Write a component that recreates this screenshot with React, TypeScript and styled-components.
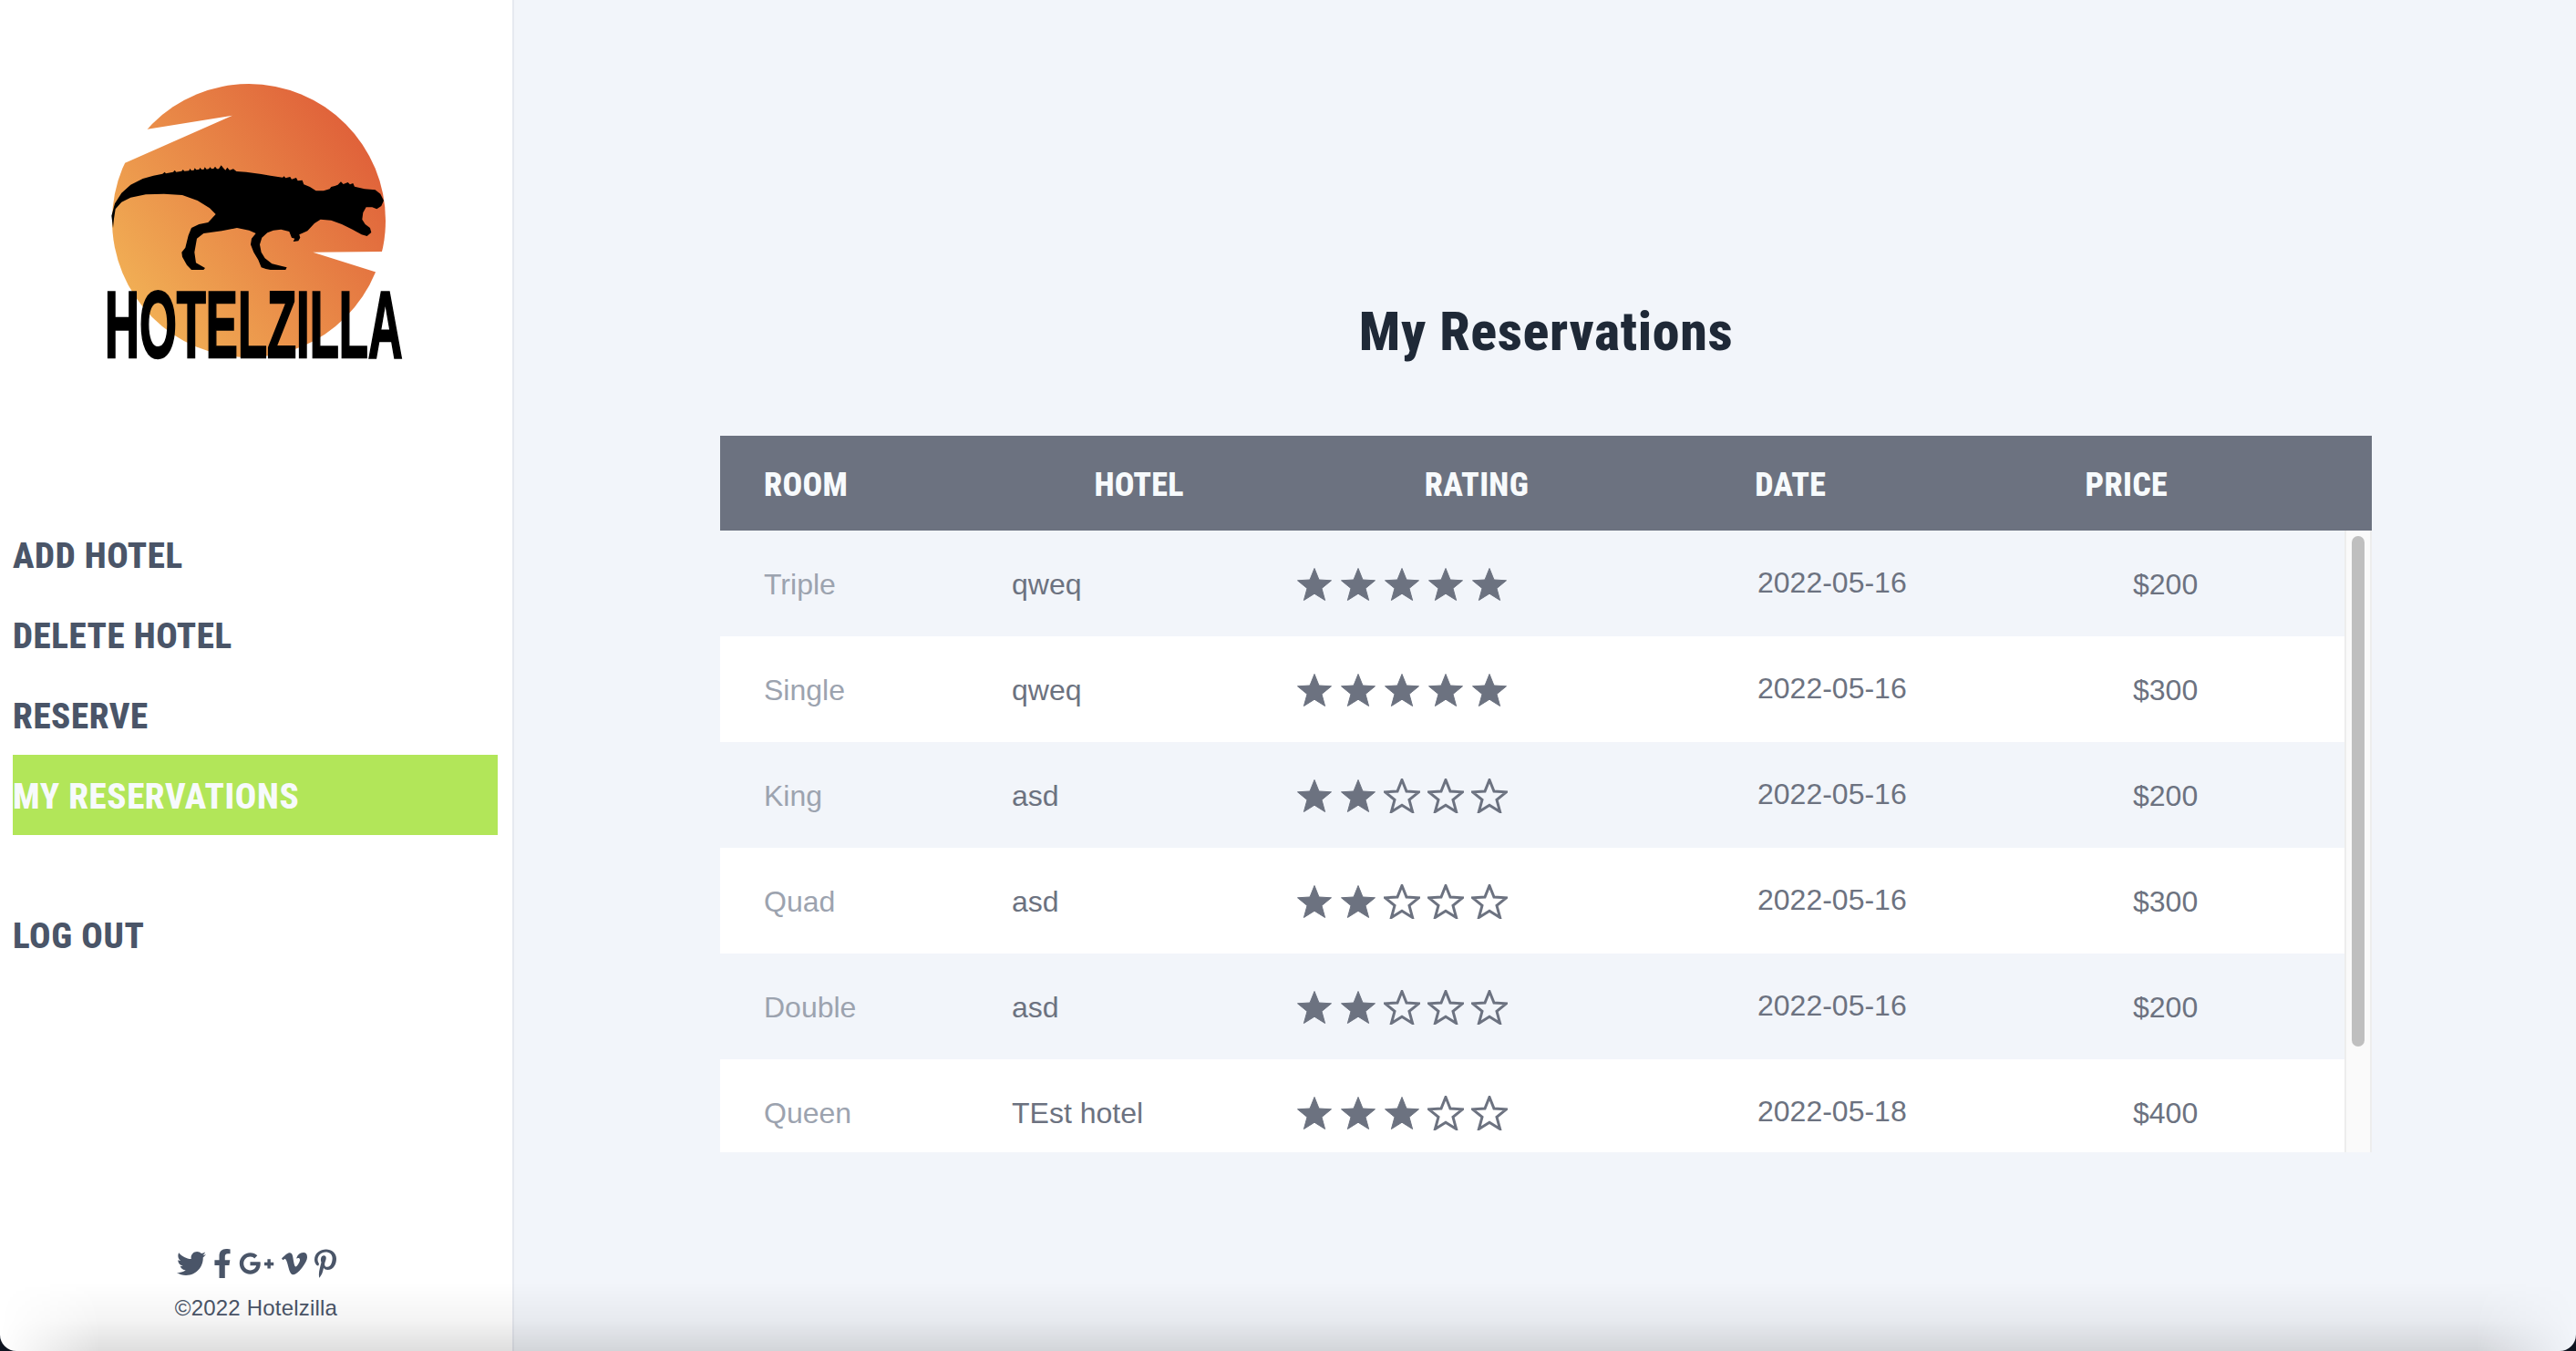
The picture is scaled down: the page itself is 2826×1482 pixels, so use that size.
import React from "react";
import styled, { createGlobalStyle } from "styled-components";
import { FaTwitter, FaFacebookF, FaGooglePlusG, FaVimeoV, FaPinterestP } from "react-icons/fa";

const Global = createGlobalStyle`
  html, body { margin: 0; padding: 0; background: #f2f5fa; }
  body { font-family: "Liberation Sans", Arial, sans-serif; overflow: hidden; }
`;

const Page = styled.div`
  position: relative;
  display: flex;
  width: 100%;
  height: 100vh;
  background: #f2f5fa;
  overflow: hidden;
`;

const BottomShade = styled.div`
  position: absolute;
  left: 0;
  right: 0;
  bottom: 0;
  height: 76px;
  pointer-events: none;
  background: linear-gradient(to bottom, rgba(0, 0, 0, 0), rgba(0, 0, 0, 0.045) 55%, rgba(0, 0, 0, 0.13) 100%);
  mask-image: linear-gradient(to right, transparent 0, #000 110px, #000 calc(100% - 110px), transparent 100%);
`;

const ScreenEdge = styled.div`
  position: absolute;
  inset: 0;
  pointer-events: none;
  border-radius: 0 0 18px 18px;
  box-shadow: 0 0 0 20px #0e1420;
`;

const Sidebar = styled.aside`
  box-sizing: content-box;
  width: 562px;
  flex: none;
  margin-right: 2px;
  display: flex;
  flex-direction: column;
  background: #fff;
  border-right: 2px solid #e6e9f0;
`;

const LogoWrap = styled.div`
  height: 520px;
  flex: none;
`;

const Nav = styled.nav`
  display: flex;
  flex-direction: column;
  padding: 44px 16px 0 14px;
`;

const NavItem = styled.a<{ $active?: boolean; $gap?: boolean }>`
  display: block;
  height: 88px;
  line-height: 92px;
  margin-top: ${(p) => (p.$gap ? "65px" : "0")};
  font-family: Roboto, "Liberation Sans", sans-serif;
  font-stretch: 75%;
  font-weight: 800;
  font-size: 39px;
  letter-spacing: 0.6px;
  text-transform: uppercase;
  white-space: nowrap;
  color: ${(p) => (p.$active ? "#f7fafc" : "#4a5568")};
  background: ${(p) => (p.$active ? "#b2e659" : "transparent")};
`;

const SideFooter = styled.footer`
  margin-top: auto;
  padding-bottom: 32px;
  display: flex;
  flex-direction: column;
  align-items: center;
  color: #4a5568;
`;

const Socials = styled.div`
  display: flex;
  align-items: center;
  gap: 8px;
  height: 32px;
`;

const Social = styled.span<{ $w: number }>`
  display: block;
  width: ${(p) => p.$w}px;
  height: 32px;
  svg { display: block; width: 100%; height: 100%; }
`;

const Copyright = styled.div`
  margin-top: 18px;
  font-size: 24px;
  line-height: 30px;
  letter-spacing: 0.2px;
`;

const Main = styled.main`
  flex: 1;
  min-width: 0;
  display: flex;
  flex-direction: column;
  align-items: center;
`;

const Title = styled.h1`
  margin: 326px 0 0;
  height: 76px;
  line-height: 76px;
  font-family: Roboto, "Liberation Sans", sans-serif;
  font-stretch: 75%;
  font-weight: 800;
  font-size: 60px;
  letter-spacing: 0.6px;
  color: #1f2937;
`;

const Table = styled.section`
  margin-top: 76px;
  width: 1812px;
`;

const Head = styled.div`
  display: grid;
  grid-template-columns: repeat(5, 1fr);
  height: 104px;
  line-height: 109px;
  background: #6c7280;
  color: #f7fafc;
  font-family: Roboto, "Liberation Sans", sans-serif;
  font-stretch: 75%;
  font-weight: 800;
  font-size: 36px;
  letter-spacing: 0.3px;
  span { padding-left: 48px; }
`;

const Body = styled.div`
  display: flex;
  height: 682px;
`;

const Rows = styled.div`
  flex: 1;
  min-width: 0;
  overflow: hidden;
`;

const Track = styled.div`
  box-sizing: border-box;
  flex: none;
  width: 30px;
  padding: 6px 6px 0 6px;
  background: #fafafa;
  border-left: 2px solid #ededed;
  border-right: 2px solid #ededed;
`;

const Thumb = styled.div`
  height: 560px;
  border-radius: 8px;
  background: #bfbfbf;
`;

const Row = styled.div<{ $odd: boolean }>`
  box-sizing: border-box;
  display: grid;
  grid-template-columns: 272px 312px 506px 412px 280px;
  height: 116px;
  padding-top: 2px;
  align-items: center;
  background: ${(p) => (p.$odd ? "#f2f5fa" : "#fff")};
  font-size: 32px;
  color: #6c7280;
`;

const Cell = styled.div<{ $light?: boolean; $raised?: boolean }>`
  padding-left: 48px;
  white-space: nowrap;
  color: ${(p) => (p.$light ? "#9ca3af" : "#6c7280")};
  margin-top: ${(p) => (p.$raised ? "-4px" : "0")};
`;

const Stars = styled.div`
  display: flex;
  gap: 8px;
  padding-left: 48px;
`;

const Star = ({ filled }: { filled: boolean }) => (
  <svg width="40" height="38" viewBox="0 0 40 38" aria-hidden="true">
    <path
      d="M20 1.5 L25 14 L38.5 14.8 L28 23.4 L31.6 36.5 L20 29.2 L8.4 36.5 L12 23.4 L1.5 14.8 L15 14 Z"
      fill={filled ? "#6c7280" : "none"}
      stroke="#6c7280"
      strokeWidth={filled ? 1 : 3}
      strokeLinejoin="miter"
    />
  </svg>
);

const LogoSvg = styled.svg`
  display: block;
`;

const DINO =
  "M42 240 L37 200 L48 160 L70 125 L100 98 L140 78 L175 68 L205 62 L212 56 L216 61 L240 56 L245 50 L250 56 L268 53 L272 48 L277 53 L292 52 L295 45 L300 51 L308 50 L311 43 L316 49 L325 48 L328 42 L334 48 L341 47 L344 40 L350 47 L357 46 L362 40 L366 46 L373 45 L378 38 L384 46 L390 46 L398 34 L405 43 L412 50 L418 41 L426 50 L438 46 L448 54 L480 56 L530 63 L560 68 L600 74 L605 70 L610 76 L625 72 L630 80 L645 75 L650 85 L665 83 L670 97 L690 105 L710 118 L735 118 L755 112 L760 105 L772 102 L782 98 L792 88 L800 96 L815 90 L822 97 L832 93 L837 104 L870 112 L905 115 L922 128 L933 150 L925 168 L910 178 L895 172 L875 172 L865 190 L862 212 L872 228 L888 240 L892 255 L878 267 L860 262 L830 245 L795 228 L760 215 L725 212 L705 225 L682 250 L655 262 L658 272 L652 283 L635 285 L640 275 L630 272 L622 252 L595 245 L570 248 L550 256 L532 272 L525 295 L530 320 L542 340 L565 358 L595 365 L614 370 L610 378 L560 378 L545 375 L530 370 L520 345 L505 320 L495 295 L498 275 L512 258 L490 248 L450 240 L400 250 L340 258 L318 275 L310 320 L315 355 L345 372 L340 378 L300 378 L285 362 L270 335 L268 320 L280 305 L290 265 L300 240 L325 228 L355 222 L380 195 L360 175 L320 150 L270 132 L210 128 L150 130 L100 140 L70 155 L50 178 L45 210 Z";

const Logo = () => (
  <LogoSvg width="562" height="520" viewBox="0 0 562 520">
    <defs>
      <linearGradient id="sun" x1="0.05" y1="0.85" x2="0.9" y2="0.2">
        <stop offset="0" stopColor="#f2b356" />
        <stop offset="1" stopColor="#e0623a" />
      </linearGradient>
    </defs>
    <circle cx="273" cy="242" r="150" fill="url(#sun)" />
    <g transform="translate(60 60) scale(0.3333)">
      <polygon points="585,200 305,245 150,240 150,372 235,355" fill="#fff" />
      <polygon points="850,650 1080,648 1200,640 1200,760 1055,715" fill="#fff" />
    </g>
    <g transform="translate(110 170) scale(0.3333)">
      <path d={DINO} fill="#000" />
    </g>
    <g transform="translate(115 392) scale(0.51 1)">
      <text
        x="0"
        y="0"
        fontFamily="'Liberation Sans', sans-serif"
        fontWeight="700"
        fontSize="103"
        stroke="#000"
        strokeWidth="2.5"
        fill="#000"
      >
        HOTELZILLA
      </text>
    </g>
  </LogoSvg>
);

const rows = [
  ["Triple", "qweq", 5, "2022-05-16", "$200"],
  ["Single", "qweq", 5, "2022-05-16", "$300"],
  ["King", "asd", 2, "2022-05-16", "$200"],
  ["Quad", "asd", 2, "2022-05-16", "$300"],
  ["Double", "asd", 2, "2022-05-16", "$200"],
  ["Queen", "TEst hotel", 3, "2022-05-18", "$400"],
] as const;

export default function App() {
  return (
    <>
      <Global />
      <Page>
        <Sidebar>
          <LogoWrap>
            <Logo />
          </LogoWrap>
          <Nav>
            <NavItem>Add Hotel</NavItem>
            <NavItem>Delete Hotel</NavItem>
            <NavItem>Reserve</NavItem>
            <NavItem $active>My Reservations</NavItem>
            <NavItem $gap>Log Out</NavItem>
          </Nav>
          <SideFooter>
            <Socials>
              <Social $w={32}><FaTwitter /></Social>
              <Social $w={20}><FaFacebookF /></Social>
              <Social $w={39}><FaGooglePlusG /></Social>
              <Social $w={28}><FaVimeoV /></Social>
              <Social $w={24}><FaPinterestP /></Social>
            </Socials>
            <Copyright>©2022 Hotelzilla</Copyright>
          </SideFooter>
        </Sidebar>
        <Main>
          <Title>My Reservations</Title>
          <Table>
            <Head>
              <span>ROOM</span>
              <span>HOTEL</span>
              <span>RATING</span>
              <span>DATE</span>
              <span>PRICE</span>
            </Head>
            <Body>
              <Rows>
                {rows.map((r, i) => (
                  <Row key={r[0]} $odd={i % 2 === 0}>
                    <Cell $light>{r[0]}</Cell>
                    <Cell>{r[1]}</Cell>
                    <Stars>
                      {[0, 1, 2, 3, 4].map((s) => (
                        <Star key={s} filled={s < r[2]} />
                      ))}
                    </Stars>
                    <Cell $raised>{r[3]}</Cell>
                    <Cell>{r[4]}</Cell>
                  </Row>
                ))}
              </Rows>
              <Track>
                <Thumb />
              </Track>
            </Body>
          </Table>
        </Main>
        <BottomShade />
        <ScreenEdge />
      </Page>
    </>
  );
}
